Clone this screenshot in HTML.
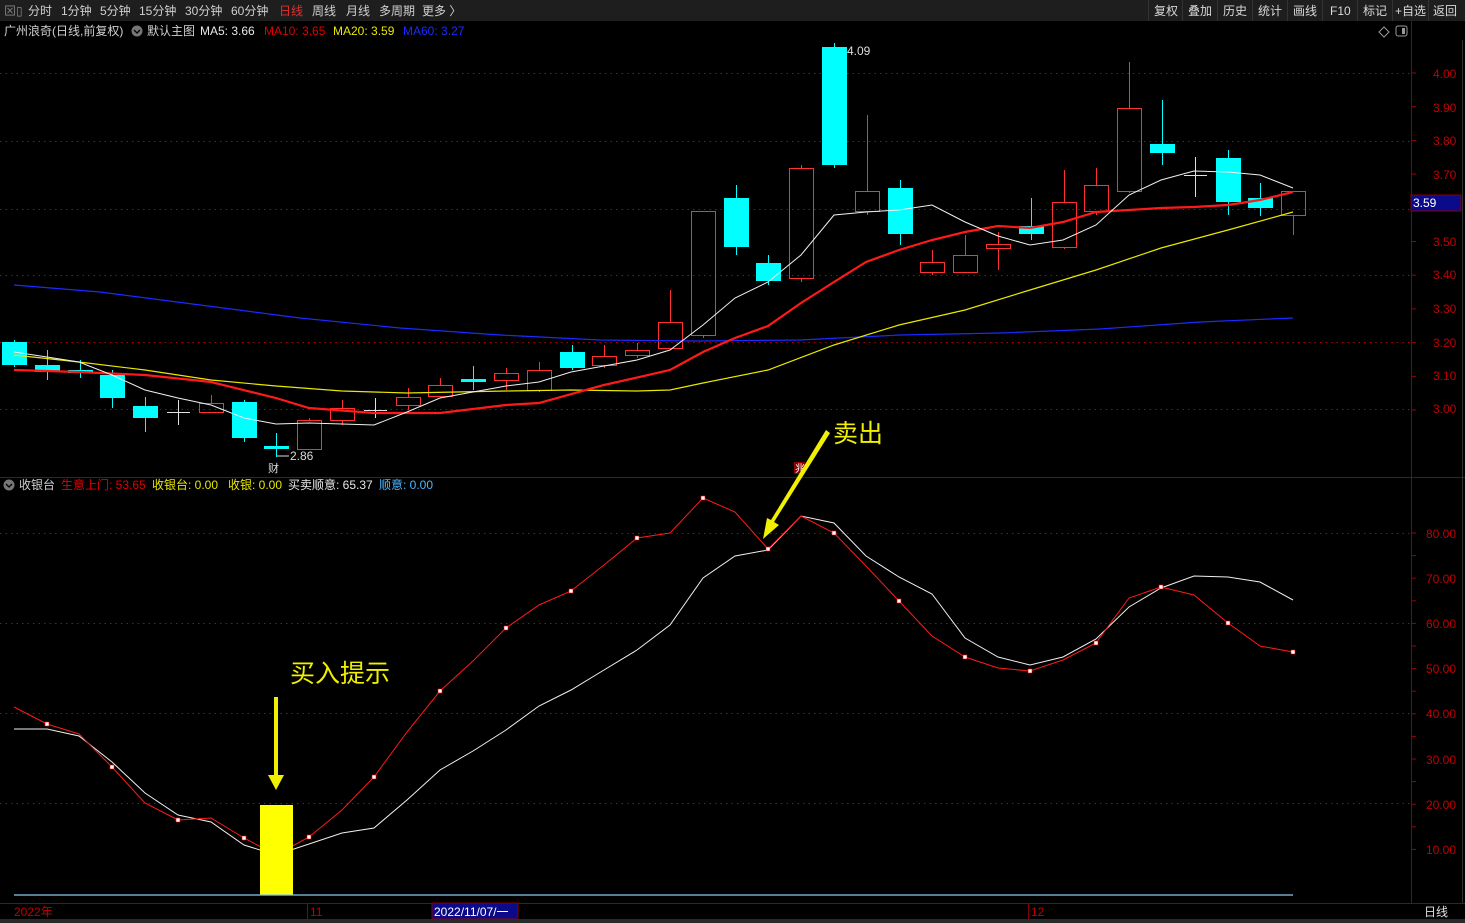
<!DOCTYPE html>
<html><head><meta charset="utf-8">
<style>
html,body{margin:0;padding:0;background:#000;width:1465px;height:923px;overflow:hidden;font-family:"Liberation Sans","Noto Sans CJK SC",sans-serif;}
svg{display:block}
text{font-family:"Liberation Sans","Noto Sans CJK SC",sans-serif;}
</style></head><body>
<svg id="s" width="1465" height="923" xmlns="http://www.w3.org/2000/svg">
<rect width="1465" height="923" fill="#000"/>
<rect x="0" y="0" width="1465" height="21" fill="#1e1e1e"/>
<g font-size="12" fill="#d0d0d0">
<text x="4" y="15" fill="#888">⊠▯</text>
<text x="28" y="15">分时</text><text x="61" y="15">1分钟</text><text x="100" y="15">5分钟</text>
<text x="139" y="15">15分钟</text><text x="185" y="15">30分钟</text><text x="231" y="15">60分钟</text>
<text x="279" y="15" fill="#e03030">日线</text><text x="312" y="15">周线</text><text x="346" y="15">月线</text>
<text x="379" y="15">多周期</text><text x="422" y="15">更多 〉</text>
</g>
<g stroke="#333" stroke-width="1">
<line x1="1148.5" y1="0" x2="1148.5" y2="21"/><line x1="1182.5" y1="0" x2="1182.5" y2="21"/><line x1="1217.5" y1="0" x2="1217.5" y2="21"/><line x1="1252.5" y1="0" x2="1252.5" y2="21"/><line x1="1287.5" y1="0" x2="1287.5" y2="21"/><line x1="1322.5" y1="0" x2="1322.5" y2="21"/><line x1="1357.5" y1="0" x2="1357.5" y2="21"/><line x1="1392.5" y1="0" x2="1392.5" y2="21"/><line x1="1428.5" y1="0" x2="1428.5" y2="21"/>
</g>
<g font-size="12" fill="#d8d8d8">
<text x="1154" y="15">复权</text><text x="1188" y="15">叠加</text><text x="1223" y="15">历史</text><text x="1258" y="15">统计</text><text x="1293" y="15">画线</text><text x="1330" y="15">F10</text><text x="1363" y="15">标记</text><text x="1395" y="15">+自选</text><text x="1433" y="15">返回</text>
</g>
<g font-size="12">
<text x="4" y="35" fill="#d0d0d0">广州浪奇(日线,前复权)</text>
<circle cx="137" cy="31" r="5.5" fill="#777"/><path d="M134 30l3 3 3-3" stroke="#000" stroke-width="1.3" fill="none"/>
<text x="147" y="35" fill="#d0d0d0">默认主图</text>
<text x="200" y="35" fill="#e8e8e8">MA5: 3.66</text>
<text x="264" y="35" fill="#e00000">MA10: 3.65</text>
<text x="333" y="35" fill="#e8e800">MA20: 3.59</text>
<text x="403" y="35" fill="#1a2bff">MA60: 3.27</text>
<path d="M1384 27l5 5-5 5-5-5z" stroke="#999" fill="none"/>
<rect x="1396" y="26" width="11" height="10" rx="2" stroke="#999" fill="none"/><rect x="1402" y="28" width="3" height="6" fill="#999"/>
</g>
<line x1="1411.5" y1="21" x2="1411.5" y2="903" stroke="#8b0000"/>
<line x1="0" y1="477.5" x2="1465" y2="477.5" stroke="#8b0000"/>
<line x1="0" y1="903.5" x2="1465" y2="903.5" stroke="#8b0000"/>
<line x1="1462.5" y1="40" x2="1462.5" y2="903" stroke="#333"/>
<rect x="0" y="919" width="1465" height="4" fill="#2a2a2a"/>
<g id="grid"></g>
<g id="chart"></g>
<g font-size="12" fill="#c00000">
<text x="1433" y="78">4.00</text><text x="1433" y="112">3.90</text><text x="1433" y="145">3.80</text><text x="1433" y="179">3.70</text>
<text x="1433" y="246">3.50</text><text x="1433" y="279">3.40</text><text x="1433" y="313">3.30</text><text x="1433" y="347">3.20</text><text x="1433" y="380">3.10</text><text x="1433" y="413">3.00</text>
<text x="1426" y="538">80.00</text><text x="1426" y="583">70.00</text><text x="1426" y="628">60.00</text><text x="1426" y="673">50.00</text><text x="1426" y="718">40.00</text><text x="1426" y="764">30.00</text><text x="1426" y="809">20.00</text><text x="1426" y="854">10.00</text>
</g>
<rect x="1411" y="195" width="50" height="16" fill="#0a0a8a" stroke="#8b0000"/>
<text x="1413" y="207" font-size="12" fill="#fff">3.59</text>
<text x="847" y="55" font-size="12" fill="#ddd">4.09</text>
<text x="290" y="460" font-size="12" fill="#ddd">2.86</text>
<path d="M277 456h12" stroke="#ddd"/>
<text x="268" y="472" font-size="11" fill="#ddd">财</text>
<rect x="794" y="462" width="11" height="12" fill="#8b0000"/><text x="795" y="472" font-size="10" fill="#fff">兆</text>
<g font-size="12">
<circle cx="9" cy="485" r="5.5" fill="#777"/><path d="M6 484l3 3 3-3" stroke="#000" stroke-width="1.3" fill="none"/>
<text x="19" y="489" fill="#d0d0d0">收银台</text>
<text x="61" y="489" fill="#e00000">生意上门: 53.65</text>
<text x="152" y="489" fill="#e8e800">收银台: 0.00</text>
<text x="228" y="489" fill="#e8e800">收银: 0.00</text>
<text x="288" y="489" fill="#e8e8e8">买卖顺意: 65.37</text>
<text x="379" y="489" fill="#4fb6ff">顺意: 0.00</text>
</g>
<g font-size="12">
<text x="14" y="916" fill="#c00000">2022年</text>
<line x1="307.5" y1="903" x2="307.5" y2="919" stroke="#8b0000"/>
<text x="310" y="916" fill="#c00000">11</text>
<rect x="432" y="903" width="86" height="16" fill="#0a0a8a" stroke="#8b0000"/>
<text x="434" y="916" fill="#fff">2022/11/07/一</text>
<line x1="1028.5" y1="903" x2="1028.5" y2="919" stroke="#8b0000"/>
<text x="1031" y="916" fill="#c00000">12</text>
<text x="1424" y="916" fill="#e0e0e0">日线</text>
</g>
<rect x="260" y="805" width="33" height="90" fill="#ffff00"/>
<line x1="14" y1="895" x2="1293" y2="895" stroke="#8cc8f0" stroke-width="1.2"/>
<polygon points="274,697 278,697 278,775 284,775 276,790 268,775 274,775" fill="#f0f000"/>
<polygon points="826,430 830,433 774,522 779,525 763,539 767,518 771,520" fill="#f0f000"/>
<text x="290" y="682" font-size="25" fill="#f0f000">买入提示</text>
<text x="833" y="442" font-size="25" fill="#f0f000">卖出</text>
</svg>
<script>
var NS="http://www.w3.org/2000/svg";
function el(p,t,a){var e=document.createElementNS(NS,t);for(var k in a)e.setAttribute(k,a[k]);p.appendChild(e);return e;}
var g=document.getElementById('grid'),c=document.getElementById('chart');
[73,141,209,275,342,409].forEach(function(y){el(g,'line',{x1:0,y1:y+.5,x2:1411,y2:y+.5,stroke:'#b00000','stroke-dasharray':'1.5 4'});});
[533,623,713,803].forEach(function(y){el(g,'line',{x1:0,y1:y+.5,x2:1411,y2:y+.5,stroke:'#b00000','stroke-dasharray':'1.5 4'});});
for(var y=73;y<=420;y+=33.7){el(g,'line',{x1:1411,y1:y,x2:1416,y2:y,stroke:'#a00000'});}
for(var y=533;y<=860;y+=22.6){el(g,'line',{x1:1411,y1:y,x2:1416,y2:y,stroke:'#a00000'});}
var C=[['c',342,365,340,367],['c',365,372,350,380],['c',370,373,360,378],['c',375,398,370,408],['c',406,418,397,432],['x',412,412,400,425],['r',403,412,395,413],['c',402,438,400,442],['c',446,449,433,457],['r',420,449,418,449],['r',408,420,400,425],['x',410,410,398,418],['r',397,405,388,410],['r',385,396,378,398],['c',379,382,366,390],['r',373,380,368,390],['r',370,390,362,392],['c',352,368,345,370],['r',356,365,345,368],['r',350,355,343,358],['r',322,348,290,350],['r',211,335,211,338],['c',198,247,185,255],['c',263,281,255,285],['r',168,278,165,282],['c',47,165,43,168],['r',191,211,115,215],['c',188,234,180,245],['r',262,272,250,275],['r',255,272,235,272],['r',244,248,232,270],['c',226,234,198,240],['r',202,247,170,249],['r',185,211,168,215],['r',108,191,62,193],['c',144,153,100,165],['x',175,175,157,197],['c',158,202,150,215],['c',198,208,183,216],['r',191,215,191,235]];
C.forEach(function(k,i){var x=Math.round(14+32.8*i);
 if(k[0]=='c'){el(c,'line',{x1:x+.5,y1:k[3],x2:x+.5,y2:k[4],stroke:'#00ffff'});el(c,'rect',{x:x-12,y:k[1],width:25,height:Math.max(2,k[2]-k[1]),fill:'#00ffff'});}
 else if(k[0]=='r'){el(c,'line',{x1:x+.5,y1:k[3],x2:x+.5,y2:k[1],stroke:'#ff3030'});el(c,'line',{x1:x+.5,y1:k[2],x2:x+.5,y2:k[4],stroke:'#ff3030'});el(c,'rect',{x:x-11.5,y:k[1]+.5,width:24,height:Math.max(1,k[2]-k[1]),fill:'none',stroke:'#ff3030'});}
 else{el(c,'line',{x1:x+.5,y1:k[3],x2:x+.5,y2:k[4],stroke:'#e0e0e0'});el(c,'line',{x1:x-11,y1:k[1]+.5,x2:x+12,y2:k[1]+.5,stroke:'#e0e0e0'});}
});
function pl(pts,col,w){el(c,'polyline',{points:pts.map(function(p){return p.join(',')}).join(' '),fill:'none',stroke:col,'stroke-width':w});}
pl([[14,285],[100,292],[200,305],[300,318],[400,328],[500,335],[600,340],[700,341],[800,340],[900,335],[1000,333],[1100,329],[1200,322],[1293,318]],'#1a2bff',1.2);
pl([[14,355],[79,362],[145,370],[211,380],[276,386],[342,391],[407,393],[506,391],[571,390],[637,391],[670,390],[703,383],[768,370],[834,345],[899,325],[965,310],[1030,290],[1096,270],[1161,248],[1228,230],[1293,212]],'#e8e800',1.2);
pl([[14,370],[79,372],[145,375],[211,382],[276,398],[309,408],[374,413],[440,413],[506,405],[539,403],[604,385],[670,370],[703,352],[735,338],[768,326],[801,303],[834,282],[866,262],[899,250],[932,240],[965,232],[998,226],[1030,228],[1063,222],[1096,212],[1129,210],[1161,208],[1194,207],[1228,205],[1260,200],[1293,192]],'#ff1a1a',2.2);
pl([[14,352],[47,357],[79,362],[112,375],[145,390],[178,398],[211,405],[244,418],[276,424],[309,423],[342,424],[374,425],[407,412],[440,398],[473,392],[506,386],[539,382],[571,372],[604,366],[637,360],[670,350],[703,325],[735,298],[768,282],[801,255],[834,215],[866,212],[899,210],[932,205],[965,222],[998,236],[1030,245],[1063,240],[1096,225],[1129,195],[1161,180],[1194,171],[1228,172],[1260,175],[1293,188]],'#f0f0f0',1);
var W=[[14,729],[47,729],[79,736],[112,762],[145,793],[178,815],[211,822],[244,845],[276,855],[309,844],[342,833],[374,828],[407,800],[440,770],[473,751],[506,730],[539,706],[571,690],[604,670],[637,650],[670,625],[703,578],[735,556],[768,550],[801,516],[834,523],[866,556],[899,577],[932,594],[965,638],[998,657],[1030,665],[1063,657],[1096,639],[1129,607],[1161,588],[1194,576],[1228,577],[1260,582],[1293,600]];
var R=[[14,707],[47,724],[79,734],[112,767],[145,803],[178,820],[211,818],[244,838],[276,855],[309,837],[342,810],[374,777],[407,732],[440,691],[473,661],[506,628],[539,605],[571,591],[604,565],[637,538],[670,533],[703,498],[735,512],[768,549],[801,516],[834,533],[866,566],[899,601],[932,636],[965,657],[998,668],[1030,671],[1063,660],[1096,643],[1129,598],[1161,587],[1194,595],[1228,623],[1260,646],[1293,652]];
pl(W,'#f0f0f0',1);pl(R,'#ff1a1a',1);
R.forEach(function(p,i){if(i%2==1)el(c,'rect',{x:p[0]-2,y:p[1]-2,width:4,height:4,fill:'#fff',stroke:'#f00','stroke-width':.6});});
</script>
</body></html>
